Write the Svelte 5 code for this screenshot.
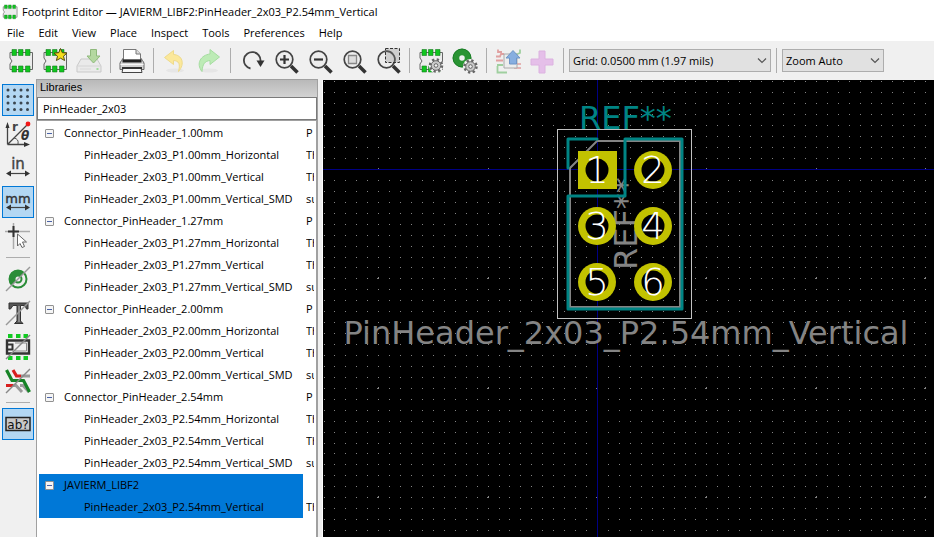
<script>
  const menus = ['File', 'Edit', 'View', 'Place', 'Inspect', 'Tools', 'Preferences', 'Help'];

  const tools = [
    { id: 'footprint', label: 'New footprint' },
    { id: 'wizard', label: 'New footprint using wizard' },
    { id: 'save', label: 'Save', disabled: true },
    null,
    { id: 'print', label: 'Print' },
    null,
    { id: 'undo', label: 'Undo', disabled: true },
    { id: 'redo', label: 'Redo', disabled: true },
    null,
    { id: 'refresh', label: 'Refresh' },
    { id: 'zoomin', label: 'Zoom in' },
    { id: 'zoomout', label: 'Zoom out' },
    { id: 'zoomfit', label: 'Zoom to fit' },
    { id: 'zoomarea', label: 'Zoom to selection' },
    null,
    { id: 'fpsettings', label: 'Footprint properties' },
    { id: 'padsettings', label: 'Default pad properties' },
    null,
    { id: 'loadboard', label: 'Load footprint from board', disabled: true },
    { id: 'insert', label: 'Insert footprint into board', disabled: true },
    null,
  ];

  let options = $state([
    { id: 'grid', label: 'Show grid', on: true },
    { id: 'polar', label: 'Polar coordinates', on: false },
    { id: 'inch', label: 'Units in inches', on: false },
    { id: 'mm', label: 'Units in millimeters', on: true },
    { id: 'cursor', label: 'Full-window crosshair', on: false },
    null,
    { id: 'pad', label: 'Sketch pads', on: false },
    { id: 'text', label: 'Sketch text', on: false },
    { id: 'edges', label: 'Sketch outlines', on: false },
    { id: 'contrast', label: 'High contrast', on: false },
    null,
    { id: 'tree', label: 'Toggle search tree', on: true },
  ]);

  const family = (pitch) => ({
    name: `Connector_PinHeader_${pitch}mm`,
    note: 'P',
    open: true,
    items: [
      [`PinHeader_2x03_P${pitch}mm_Horizontal`, 'Th'],
      [`PinHeader_2x03_P${pitch}mm_Vertical`, 'Th'],
      [`PinHeader_2x03_P${pitch}mm_Vertical_SMD`, 'su'],
    ],
  });

  let libs = $state([
    ...['1.00', '1.27', '2.00', '2.54'].map(family),
    {
      name: 'JAVIERM_LIBF2',
      note: '',
      open: true,
      selected: true,
      items: [['PinHeader_2x03_P2.54mm_Vertical', 'Th']],
    },
  ]);

  let filter = $state('PinHeader_2x03');

  // Canvas coordinates: the footprint origin and the screen grid pitch.
  const ox = 274;
  const oy = 89;
  const pitch = 10.94;
  const dots = [];
  const marks = [];
  for (let i = -25; i < 150; i++) {
    for (let j = -8; j < 110; j++) {
      const x = Math.round(ox + i * pitch);
      const y = Math.round(oy + j * pitch);
      dots.push(`M${x} ${y}h1v1h-1z`);
      if (i % 10 === 0 && j % 10 === 0) marks.push(`M${x} ${y - 1}h1v2h-2v-1h1z`);
    }
  }

  const pads = [1, 2, 3, 4, 5, 6].map((n) => ({
    n,
    x: ox + ((n - 1) % 2) * 56,
    y: oy + 1 + Math.floor((n - 1) / 2) * 56,
  }));
</script>

{#snippet chip()}
  <path d="M2 4.500H24.500V21.500H2V16L4 13L2 10Z" fill="#ececec" stroke="#666" />
  <path d="M4 1.500h4.500v6H4zM10.500 1.500H15v6h-4.500zM17.500 1.500H22v6h-4.500zM4 18h4.500v6H4zM10.500 18H15v6h-4.500zM17.500 18H22v6h-4.500z" fill="#0fc71e" stroke="#177a20" stroke-width=".6" />
{/snippet}

{#snippet gear(x, y)}
  <g transform="translate({x} {y})">
    <circle r="7.500" fill="#f4f4f4" />
    <circle r="6" fill="none" stroke="#666" stroke-width="2.500" stroke-dasharray="2.300 2.410" />
    <circle r="4.800" fill="#c9c9c9" stroke="#666" />
    <circle r="1.800" fill="#f4f4f4" stroke="#666" />
  </g>
{/snippet}

{#snippet lens()}
  <path d="M18 18L24.500 24.500" stroke="#333" stroke-width="3.600" />
  <circle cx="11.500" cy="11.500" r="8.300" fill="#ededed" stroke="#444" stroke-width="1.700" />
{/snippet}

{#snippet arrows()}
  <path d="M3 18.500H23" stroke="#444" stroke-width="1.200" />
  <path d="M1 18.500L6 15.500V21.500zM25 18.500L20 15.500V21.500z" fill="#333" />
{/snippet}

{#snippet icon(id)}
  <svg class="icon" viewBox="0 0 26 26" width="26" height="26" fill="none" aria-hidden="true">
    {#if id === 'footprint'}
      {@render chip()}
    {:else if id === 'wizard'}
      {@render chip()}
      <path d="M18.500 .500L20.300 4.700L25 5.100L21.500 8.200L22.600 12.500L18.500 10.200L14.400 12.500L15.500 8.200L12 5.100L16.700 4.700Z" fill="#f4dc1d" stroke="#554c12" />
    {:else if id === 'save'}
      <path d="M5 11H21L25 18V24H1V18Z" fill="#eaeaea" stroke="#c9c9c9" />
      <path d="M1.500 18H24.500" stroke="#d4d4d4" />
      <path d="M4 21h11" stroke="#dadada" />
      <path d="M20.500 21h2" stroke="#9fdc9a" stroke-width="2" />
      <path d="M14.500 1.500H20.500V8H24L17.500 15L11 8H14.500Z" fill="#b4d8a0" stroke="#8fb97c" />
    {:else if id === 'print'}
      <path d="M2.500 12.500L5 9H21L23.500 12.500L25 15V21.500H1V15Z" fill="#d5d5d5" stroke="#666" />
      <path d="M4.500 12V1.500H17L21.500 6V12Z" fill="#fff" stroke="#777" />
      <path d="M17 1.500V6H21.500" fill="#ddd" stroke="#777" />
      <path d="M3.500 11.500H22.500V14.500H3.500Z" fill="#222" />
      <path d="M1.500 16.500H24.500" stroke="#f8f8f8" />
      <path d="M4 20H22L23 24.500H3Z" fill="#f7f7f7" stroke="#444" />
      <path d="M3 20H23" stroke="#333" stroke-width="2" />
    {:else if id === 'undo' || id === 'redo'}
      <ellipse cx="13" cy="22.500" rx="9" ry="2" fill="#e6e6e6" />
      {#if id === 'undo'}
        <path d="M2.500 9.500L11.500 2.500V6.500C20 7 23.500 15.500 16.500 23.500C18.500 16 17 12.800 11.500 12.500V16.500Z" fill="#fbe89a" stroke="#eeda8b" />
      {:else}
        <path d="M23.500 9L14 1.500V6C5 7 -.500 15.500 6 23.500C6.500 16 9 13 14 12.500V16.500Z" fill="#bdebb6" stroke="#a5dda0" />
      {/if}
    {:else if id === 'refresh'}
      <path d="M11.500 20.500A8.300 8.300 0 1 1 21.500 13" stroke="#444" stroke-width="1.800" />
      <path d="M17.500 12.500H25.500L21.500 19Z" fill="#333" />
    {:else if id === 'zoomin'}
      {@render lens()}
      <path d="M7 11.500H16M11.500 7V16" stroke="#333" stroke-width="2.200" />
    {:else if id === 'zoomout'}
      {@render lens()}
      <path d="M7 11.500H16" stroke="#333" stroke-width="2.200" />
    {:else if id === 'zoomfit'}
      {@render lens()}
      <path d="M7.500 7.500H15.500V15.500H7.500Z" fill="#ddd" stroke="#888" stroke-width="1.300" />
    {:else if id === 'zoomarea'}
      {@render lens()}
      <path d="M10.500 .500H24.500V14.500H10.500Z" fill="#c6c6c6" fill-opacity=".8" stroke="#333" stroke-dasharray="3 1.500" />
      <path d="M10.500 3.300A8.300 8.300 0 0 1 19.500 14" stroke="#555" stroke-width="1.700" />
    {:else if id === 'fpsettings'}
      {@render chip()}
      {@render gear(18, 17.500)}
    {:else if id === 'padsettings'}
      <circle cx="10" cy="10" r="6" stroke="#2a9433" stroke-width="6.500" />
      <circle cx="10" cy="10" r="9" stroke="#1a7d26" />
      {@render gear(18.500, 18.500)}
    {:else if id === 'loadboard'}
      <path d="M1 8.500H5L6 6H9M1 12.500H8M3 1.500V4H7" stroke="#e0a0a0" stroke-width="1.800" />
      <path d="M2 17H8M12 24.500H2.500V18M25 1.500V5L20 7" stroke="#9fcf9f" stroke-width="1.800" />
      <path d="M19 20H26M19 16H26" stroke="#e0a0a0" stroke-width="1.500" />
      <path d="M9 6H22V20H9Z" fill="#ededed" stroke="#aaa" />
      <path d="M18 2.500L25 10H21.500V16H14.500V10H11Z" fill="#87aee0" stroke="#6f95c6" />
    {:else if id === 'insert'}
      <path d="M10 3H16V11H24V17H16V25H10V17H2V11H10Z" fill="#e5bfe9" stroke="#dcb2e0" />
    {:else if id === 'grid'}
      {#each [3, 9.500, 16, 22.500] as y}
        {#each [3, 9.500, 16, 22.500] as x}
          <circle cx={x} cy={y} r="1.500" fill="#3b4650" />
        {/each}
      {/each}
    {:else if id === 'polar'}
      <path d="M2.500 23.500V4M2.500 23.500H22M2.500 23.500L22 4" stroke="#444" stroke-width="1.300" />
      <path d="M2.500 1L.500 7H4.500ZM25 23.500L19 21V26Z" fill="#333" />
      <path d="M9 17Q14 18 13 23" stroke="#555" />
      <circle cx="23" cy="3" r="2.400" fill="#f21818" />
      <text x="7" y="10" font-size="12" font-weight="700" fill="#444">r</text>
      <text x="16" y="19" font-size="12" font-weight="700" font-style="italic" fill="#333">θ</text>
    {:else if id === 'inch'}
      <text x="13" y="14" font-size="15" text-anchor="middle" fill="#444" stroke="#444" stroke-width=".4">in</text>
      {@render arrows()}
    {:else if id === 'mm'}
      <text x="13" y="14" font-size="13" text-anchor="middle" fill="#333" stroke="#333" stroke-width=".4">mm</text>
      {@render arrows()}
    {:else if id === 'cursor'}
      <path d="M8.500 0V26M0 8.500H25" stroke="#aaa" stroke-width="1.500" />
      <path d="M8.500 3V14M3 8.500H14" stroke="#333" stroke-width="2" />
      <path d="M12.500 11L21.500 19H17.500L19.500 23.500L17 24.500L15 20.500L12.500 23Z" fill="#fff" stroke="#666" />
    {:else if id === 'pad'}
      <circle cx="13" cy="13" r="8.500" fill="#eee" stroke="#2b8d38" stroke-width="2" />
      <path d="M19 7A8.500 8.500 0 1 0 7 19Z" fill="#2b8d38" />
      <circle cx="13" cy="13" r="3.500" fill="#eee" stroke="#2b8d38" stroke-width="2" />
      <path d="M1 25L25 1" stroke="#999" stroke-width="1.500" />
    {:else if id === 'text'}
      <path d="M4 3H23V9H21.500L20 5.500H15.500V21L18 23.500H9.500L12 21V5.500H8L5.500 9H4Z" fill="#555" stroke="#333" />
      <path d="M14 6V22" stroke="#bbb" />
      <path d="M1 25L25 1" stroke="#999" stroke-width="1.500" />
    {:else if id === 'edges'}
      <path d="M3 0h4.500v4H3zM11 0h4.500v4H11zM18.500 0H23v4h-4.500zM3 22h4.500v4H3zM11 22h4.500v4H11zM18.500 22H23v4h-4.500z" fill="#10ca20" />
      <path d="M2 6.500H24V19.500H2Z" stroke="#333" stroke-width="2.400" />
      <path d="M3 10.500H7.500V15.500H3" stroke="#333" stroke-width="2" />
      <path d="M10 9H21.500V17H10" stroke="#888" />
      <path d="M1 25L25 1" stroke="#888" stroke-width="1.500" />
    {:else if id === 'contrast'}
      <path d="M8 2L11.500 8H16M1 17.500H8" stroke="#d81e1e" stroke-width="3.200" />
      <path d="M16 8H25M8 17.500H11L17 24M15 17.500H18L24 24" stroke="#999" stroke-width="3" />
      <path d="M1.500 2L7 12.500H18.500L24.500 24" stroke="#168326" stroke-width="3.200" />
      <path d="M1 25L25 1" stroke="#888" stroke-width="1.500" />
    {:else if id === 'tree'}
      <path d="M1 6.500H25V19.500H1Z" fill="#c8c8c8" stroke="#222" stroke-width="1.500" />
      <text x="13" y="17.500" font-size="12" text-anchor="middle" fill="#111">ab?</text>
    {/if}
  </svg>
{/snippet}

{#snippet chevron()}
  <svg class="chevron" viewBox="0 0 10 6" width="10" height="6" fill="none" aria-hidden="true">
    <path d="M1 .500L5 4.500L9 .500" stroke="#555" stroke-width="1.200" />
  </svg>
{/snippet}

<div class="window">
  <header class="title">
    <svg viewBox="0 0 26 26" width="16" height="16" fill="none" aria-hidden="true">{@render chip()}</svg>
    <span>Footprint Editor — JAVIERM_LIBF2:PinHeader_2x03_P2.54mm_Vertical</span>
  </header>

  <nav class="menu">
    {#each menus as m}<button>{m}</button>{/each}
  </nav>

  <div class="toolbar" role="toolbar" aria-label="Main">
    {#each tools as t}
      {#if t}
        <button class="tool" aria-label={t.label} disabled={t.disabled}>{@render icon(t.id)}</button>
      {:else}
        <span class="sep"></span>
      {/if}
    {/each}
    <div class="combo grid-combo">
      <select aria-label="Grid"><option>Grid: 0.0500 mm (1.97 mils)</option></select>
      {@render chevron()}
    </div>
    <span class="sep wide"></span>
    <div class="combo zoom-combo">
      <select aria-label="Zoom"><option>Zoom Auto</option></select>
      {@render chevron()}
    </div>
  </div>

  <main>
    <div class="options" role="toolbar" aria-label="Options">
      {#each options as o}
        {#if o}
          <button class="option" class:on={o.on} aria-label={o.label} aria-pressed={o.on} onclick={() => (o.on = !o.on)}>
            {@render icon(o.id)}
          </button>
        {:else}
          <span class="rule"></span>
        {/if}
      {/each}
    </div>

    <section class="panel">
      <label class="caption" for="filter">Libraries</label>
      <input id="filter" type="text" bind:value={filter} spellcheck="false" />
      <div class="list">
        {#each libs as lib}
          <div class="row" class:selected={lib.selected}>
            <div class="name">
              <button class="expander" aria-label="Toggle {lib.name}" aria-expanded={lib.open} onclick={() => (lib.open = !lib.open)}></button>
              <span>{lib.name}</span>
            </div>
            <div class="note">{lib.note}</div>
          </div>
          {#if lib.open}
            {#each lib.items as [name, note]}
              <div class="row" class:selected={lib.selected}>
                <div class="name child">{name}</div>
                <div class="note">{note}</div>
              </div>
            {/each}
          {/if}
        {/each}
      </div>
    </section>

    <div class="view">
      <svg class="canvas" role="img" aria-label="Footprint">
        <path d={dots.join('')} fill="#848484" shape-rendering="crispEdges" />
        <path d={marks.join('')} fill="#848484" shape-rendering="crispEdges" />
        <path d="M274.500 0V2000M0 89.500H4000" stroke="#000084" />

        <rect x="234.500" y="49.500" width="134" height="189" fill="none" stroke="#c2c2c2" />
        <path d="M274 61H357V227H247V88Z" fill="none" stroke="#848484" stroke-width="2" />
        <text class="big grey" x="303" y="264" text-anchor="middle">PinHeader_2x03_P2.54mm_Vertical</text>
        <text class="big grey" transform="translate(314 190) rotate(-90)">REF**</text>

        <g fill="none" stroke="#008484" stroke-width="3" stroke-linecap="round" stroke-linejoin="round">
          <path d="M245 88V59H274" />
          <path d="M302 59H359V229H245V116H302Z" />
        </g>
        <text class="big teal" x="256" y="49">REF**</text>

        {#each pads as p}
          {#if p.n === 1}
            <rect x={p.x - 19} y={p.y - 19} width="39" height="38" fill="#c2c200" />
          {:else}
            <circle cx={p.x} cy={p.y} r="19" fill="#c2c200" />
          {/if}
          <circle cx={p.x} cy={p.y} r="11.500" fill="#000" />
          <text class="num" x={p.x} y={p.y + 13} text-anchor="middle">{p.n}</text>
        {/each}
      </svg>
    </div>
  </main>
</div>

<style>
  :global(body) {
    margin: 0;
  }

  .window {
    display: flex;
    flex-direction: column;
    height: 100vh;
    overflow: hidden;
    background: #fff;
    color: #000;
    font: 11px/16px 'Open Sans', 'Noto Sans', sans-serif;
  }

  button,
  input,
  select {
    margin: 0;
    padding: 0;
    border: 0;
    background: none;
    color: inherit;
    font: inherit;
  }

  .title {
    display: flex;
    align-items: center;
    gap: 4px;
    height: 24px;
    padding-left: 2px;
    white-space: nowrap;
  }

  .menu {
    display: flex;
    height: 17px;
    gap: 14px;
    padding-left: 7px;
  }

  .toolbar {
    display: flex;
    align-items: center;
    flex: none;
    box-sizing: border-box;
    height: 38px;
    padding: 1px 0 0 4px;
    background: #f0f0f0;
  }

  .tool {
    display: grid;
    place-items: center;
    flex: none;
    box-sizing: border-box;
    width: 34px;
    height: 33px;
    padding-top: 1px;
  }

  .icon {
    display: block;
    font-family: 'DejaVu Sans', sans-serif;
  }

  .sep {
    flex: none;
    width: 1px;
    height: 25px;
    margin: 0 4px;
    background: #adadad;
  }

  .sep.wide {
    margin: 0 5px;
  }

  .combo {
    position: relative;
    flex: none;
    height: 23px;
  }

  .grid-combo {
    width: 202px;
    margin-left: 1px;
  }

  .zoom-combo {
    width: 102px;
  }

  .combo select {
    box-sizing: border-box;
    width: 100%;
    height: 100%;
    padding-left: 3px;
    border: 1px solid #adadad;
    background: #e1e1e1;
    appearance: none;
  }

  .chevron {
    position: absolute;
    right: 4px;
    top: 9px;
    pointer-events: none;
  }

  main {
    display: flex;
    flex: 1;
    min-height: 0;
    background: #f0f0f0;
  }

  .options {
    display: flex;
    flex-direction: column;
    align-items: center;
    gap: 2px;
    flex: none;
    width: 36px;
    padding-top: 5px;
  }

  .option {
    display: grid;
    place-items: center;
    box-sizing: border-box;
    width: 32px;
    height: 32px;
    border: 1px solid transparent;
  }

  .option.on {
    border-color: #0078d7;
    background: #b3d7f3;
  }

  .rule {
    width: 24px;
    height: 1px;
    margin: 3px 0;
    background: #adadad;
  }

  .panel {
    display: flex;
    flex-direction: column;
    box-sizing: border-box;
    flex: none;
    width: 282px;
    border: 1px solid #a0a0a0;
    border-bottom: 0;
    background: #fff;
  }

  .caption {
    height: 17px;
    padding-left: 3px;
    background: linear-gradient(#b9b9b9, #d2d2d2);
    font: 11px/15px 'Liberation Sans', Arial, sans-serif;
  }

  #filter {
    box-sizing: border-box;
    height: 23px;
    padding-left: 5px;
    border: 1px solid #7a7a7a;
    background: #fff;
  }

  .list {
    flex: 1;
    padding: 1px 1px 0;
    border: solid #a0a0a0;
    border-width: 1px 1px 0 0;
    overflow: hidden;
    white-space: nowrap;
  }

  .row {
    display: flex;
    height: 22px;
    line-height: 22px;
  }

  .name {
    display: flex;
    align-items: center;
    gap: 10px;
    box-sizing: border-box;
    flex: 1;
    min-width: 0;
    margin-left: 1px;
    padding-left: 6px;
  }

  .name.child {
    padding-left: 45px;
  }

  .selected .name {
    background: #0078d7;
  }

  .note {
    flex: none;
    width: 8px;
    margin: 0 1px 0 3px;
    overflow: hidden;
  }

  .expander {
    box-sizing: border-box;
    width: 9px;
    height: 9px;
    border: 1px solid #919191;
    border-radius: 1px;
    background: linear-gradient(#4b63a7, #4b63a7) center / 5px 1px no-repeat #f5f5f5;
  }

  .view {
    flex: 1;
    min-width: 0;
    margin: 1px 0 0 4px;
    border-left: 1px solid #fff;
    background: #000;
  }

  .canvas {
    display: block;
    width: 100%;
    height: 100%;
    font-family: 'DejaVu Sans', sans-serif;
  }

  .big {
    font-size: 32px;
  }

  .grey {
    fill: #848484;
  }

  .teal {
    fill: #008484;
  }

  .num {
    fill: #fff;
    font-size: 37px;
    font-weight: 200;
  }
</style>
